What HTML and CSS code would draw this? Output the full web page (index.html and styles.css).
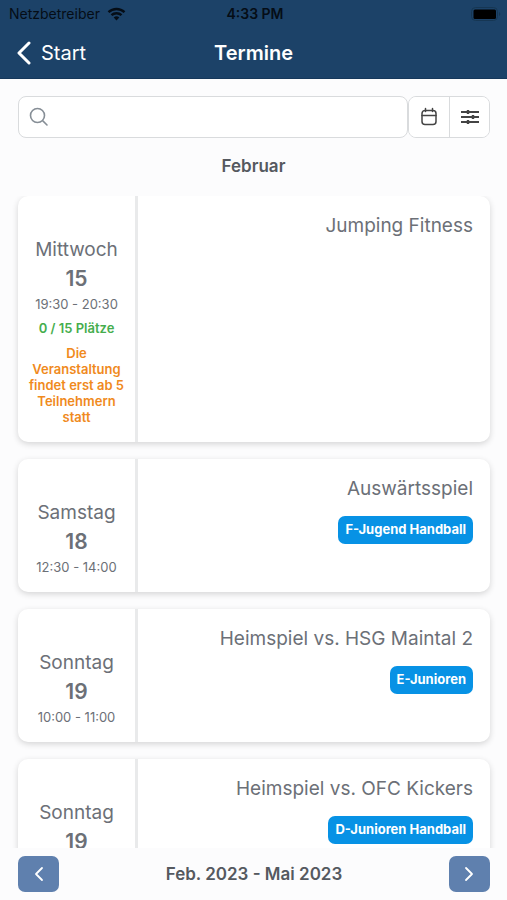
FILE: index.html
```
<!DOCTYPE html>
<html lang="de">
<head>
  <meta charset="UTF-8">
  <meta name="viewport" content="width=device-width, initial-scale=1.0">
  <title>Termine</title>
  <link rel="stylesheet" href="styles.css">
</head>
<body>
  <header class="header">
    <div class="status-bar">
      <div class="carrier">
        Netzbetreiber
        <svg width="19" height="14" viewBox="0 0 18 14" aria-hidden="true">
          <path d="M1 5.2a11.5 11.5 0 0 1 16 0M4 8.2a7.2 7.2 0 0 1 10 0" fill="none" stroke="#050d16" stroke-width="2.4"/>
          <path d="M9 13.4 6.2 10.6a4 4 0 0 1 5.6 0z" fill="#050d16"/>
        </svg>
      </div>
      <div class="time">4:33 PM</div>
      <div class="battery">
        <svg width="30" height="14" viewBox="0 0 30 14" aria-hidden="true">
          <rect x="0.5" y="0.5" width="26" height="13" rx="4" fill="none" stroke="#163653"/>
          <rect x="2.500" y="2.500" width="22.500" height="9.500" rx="1.500" fill="#000"/>
          <path d="M28 5v4a2.2 2.2 0 0 0 0-4z" fill="#163653"/>
        </svg>
      </div>
    </div>
    <nav class="nav-bar">
      <a class="back" href="#start">
        <svg width="16" height="24" viewBox="0 0 16 24" aria-hidden="true">
          <path d="M13 2 3 12l10 10" fill="none" stroke="#fff" stroke-width="3" stroke-linecap="round" stroke-linejoin="round"/>
        </svg>
        Start
      </a>
      <h1>Termine</h1>
    </nav>
  </header>

  <form class="toolbar">
    <label class="search">
      <svg width="20" height="20" viewBox="0 0 20 20" aria-hidden="true">
        <path d="M8.5 1.5a7 7 0 1 0 0 14a7 7 0 1 0 0-14zM13.6 13.6 18 18" fill="none" stroke="#868e96" stroke-width="1.6" stroke-linecap="round"/>
      </svg>
      <input type="search" aria-label="Suche">
    </label>
    <div class="button-group">
      <button type="button" aria-label="Kalender">
        <svg width="18" height="20" viewBox="0 0 18 20" fill="none" stroke="#444" stroke-width="1.5" stroke-linecap="round" aria-hidden="true">
          <rect x="2" y="3.5" width="14" height="14" rx="3"/>
          <path d="M2 8.5h14M5.5 1.5v3M12.5 1.5v3"/>
        </svg>
      </button>
      <button type="button" aria-label="Filter">
        <svg width="18" height="16" viewBox="0 0 18 16" fill="none" stroke="#444" stroke-width="1.8" aria-hidden="true">
          <path d="M0 3h18M0 8h18M0 13h18"/>
          <path d="M7 1v4M12 6v4M7 11v4" stroke-width="2.4"/>
        </svg>
      </button>
    </div>
  </form>

  <h2 class="month">Februar</h2>

  <main class="events">
    <article class="event">
      <div class="date">
        <div class="weekday">Mittwoch</div>
        <div class="day">15</div>
        <div class="hours">19:30 - 20:30</div>
        <div class="places">0 / 15 Plätze</div>
        <div class="notice">Die Veranstaltung findet erst ab 5 Teilnehmern statt</div>
      </div>
      <div class="details">
        <h3>Jumping Fitness</h3>
      </div>
    </article>

    <article class="event">
      <div class="date">
        <div class="weekday">Samstag</div>
        <div class="day">18</div>
        <div class="hours">12:30 - 14:00</div>
      </div>
      <div class="details">
        <h3>Auswärtsspiel</h3>
        <span class="badge">F-Jugend Handball</span>
      </div>
    </article>

    <article class="event">
      <div class="date">
        <div class="weekday">Sonntag</div>
        <div class="day">19</div>
        <div class="hours">10:00 - 11:00</div>
      </div>
      <div class="details">
        <h3>Heimspiel vs. HSG Maintal 2</h3>
        <span class="badge">E-Junioren</span>
      </div>
    </article>

    <article class="event">
      <div class="date">
        <div class="weekday">Sonntag</div>
        <div class="day">19</div>
      </div>
      <div class="details">
        <h3>Heimspiel vs. OFC Kickers</h3>
        <span class="badge">D-Junioren Handball</span>
      </div>
    </article>
  </main>

  <footer class="pager">
    <button type="button" aria-label="Zurück">
      <svg width="10" height="16" viewBox="0 0 10 16" aria-hidden="true">
        <path d="M8 2 2 8l6 6" fill="none" stroke="#fff" stroke-width="1.8" stroke-linecap="round" stroke-linejoin="round"/>
      </svg>
    </button>
    <div class="range">Feb. 2023 - Mai 2023</div>
    <button type="button" aria-label="Weiter">
      <svg width="10" height="16" viewBox="0 0 10 16" aria-hidden="true">
        <path d="m2 2 6 6-6 6" fill="none" stroke="#fff" stroke-width="1.8" stroke-linecap="round" stroke-linejoin="round"/>
      </svg>
    </button>
  </footer>
</body>
</html>
```
FILE: styles.css
```
* {
  box-sizing: border-box;
}
body {
  display: flex;
  flex-direction: column;
  height: 100vh;
  margin: 0;
  font-family: Inter, "Liberation Sans", sans-serif;
  color: #6c7077;
  background-color: #fcfcfd;
}
h1, h2, h3 {
  margin: 0;
}
svg {
  display: block;
}
button {
  display: flex;
  align-items: center;
  justify-content: center;
  padding: 0;
  border: none;
  cursor: pointer;
}

/* header */
.header {
  color: white;
  background-color: #1c4268;
  border-bottom: 1px solid #16385b;
}
.status-bar, .nav-bar {
  display: grid;
  grid-template-columns: 1fr auto 1fr;
  align-items: center;
}
.status-bar {
  height: 27px;
  padding: 0 6px 0 9px;
  font-size: 14px;
  color: #050d16;
}
.carrier {
  display: flex;
  align-items: center;
  gap: 7px;
}
.time {
  font-weight: 600;
}
.battery {
  justify-self: end;
}
.nav-bar {
  height: 51px;
  padding: 0 16px;
}
.back {
  display: flex;
  align-items: center;
  gap: 9px;
  font-size: 20px;
  color: white;
  text-decoration: none;
}
.nav-bar h1 {
  font-size: 20px;
  font-weight: 600;
}

/* search and filter */
.toolbar {
  display: flex;
  padding: 17px 17px 0 18px;
}
.search {
  display: flex;
  flex: 1;
  align-items: center;
  gap: 8px;
  height: 42px;
  padding: 0 10px;
  background-color: white;
  border: 1px solid #d9dbdd;
  border-radius: 8px;
}
.search input {
  flex: 1;
  min-width: 0;
  font: inherit;
  color: inherit;
  background: none;
  border: none;
  outline: none;
}
.button-group {
  display: flex;
  border: 1px solid #d9dbdd;
  border-radius: 8px;
  overflow: hidden;
}
.button-group button {
  width: 40px;
  background-color: white;
}
.button-group button + button {
  border-left: 1px solid #d9dbdd;
}

.month {
  padding: 16px 0 18px;
  font-size: 17px;
  font-weight: 600;
  line-height: 24px;
  text-align: center;
  color: #55595f;
}

/* event list */
.events {
  flex: 1;
  min-height: 0;
  padding: 0 17px 0 18px;
  overflow: hidden;
}
.event {
  display: flex;
  margin-bottom: 17px;
  background-color: white;
  border-radius: 10px;
  box-shadow: 0 2px 6px rgba(0, 0, 0, 0.16);
}
.date {
  width: 120px;
  padding: 41px 8px 15px;
  border-right: 3px solid #e9eaeb;
  text-align: center;
}
.weekday {
  font-size: 19px;
  line-height: 26px;
}
.day {
  font-size: 21px;
  font-weight: 600;
  line-height: 31px;
}
.hours {
  font-size: 13px;
  line-height: 20px;
}
.places {
  margin-top: 4px;
  font-size: 13px;
  font-weight: 600;
  line-height: 20px;
  color: #45ad4d;
}
.notice {
  margin: 7px 0 2px;
  font-size: 13px;
  font-weight: 600;
  line-height: 16px;
  color: #f08a1d;
}
.details {
  display: flex;
  flex: 1;
  flex-direction: column;
  align-items: flex-end;
  gap: 14px;
  padding: 17px;
}
.details h3 {
  font-size: 19px;
  font-weight: 400;
  line-height: 26px;
}
.badge {
  padding: 4px 7px 6px;
  font-size: 13px;
  font-weight: 700;
  line-height: 18px;
  color: white;
  background-color: #0792e5;
  border-radius: 7px;
}

/* date range pager */
.pager {
  display: flex;
  align-items: center;
  justify-content: space-between;
  height: 52px;
  padding: 0 17px 0 18px;
}
.pager button {
  width: 41px;
  height: 36px;
  background-color: #5f80ae;
  border-radius: 7px;
}
.range {
  font-size: 17px;
  font-weight: 600;
  color: #55595f;
}
```
